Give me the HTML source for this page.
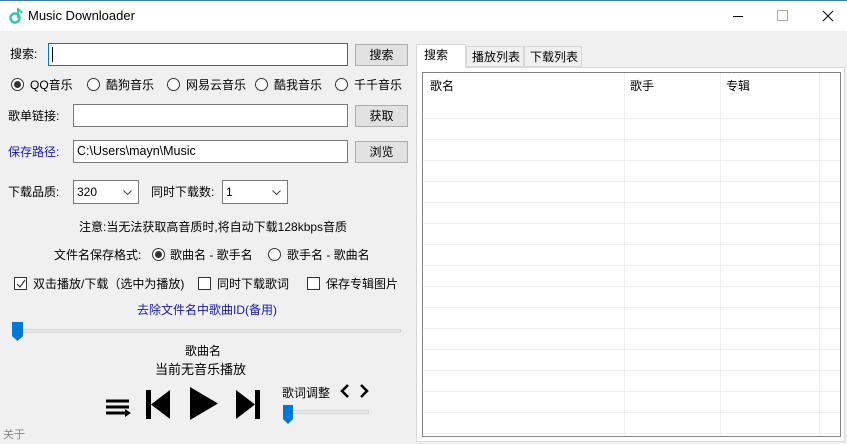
<!DOCTYPE html>
<html><head><meta charset="utf-8"><style>
*{margin:0;padding:0;box-sizing:border-box}
body{width:847px;height:444px;background:#f0f0f0;font-family:"Liberation Sans","Noto Sans CJK SC",sans-serif;font-size:12px;color:#000;position:relative;overflow:hidden}
.a{position:absolute;white-space:nowrap;line-height:14px}
.tb{position:absolute;left:0;top:0;width:847px;height:31px;background:#fff;border-top:1px solid #3a7bb5}
.in{position:absolute;background:#fff;border:1px solid #7a7a7a;height:23px}
.btn{position:absolute;background:#e1e1e1;border:1px solid #adadad;width:53px;height:22px;text-align:center;line-height:20px}
.rd{position:absolute;width:13px;height:13px;border:1px solid #333;border-radius:50%;background:#fff}
.rd.on::after{content:"";position:absolute;left:2px;top:2px;width:7px;height:7px;border-radius:50%;background:#333}
.cb{position:absolute;width:13px;height:13px;border:1px solid #333;background:#fff}
.sel{position:absolute;background:#fff;border:1px solid #7a7a7a;height:24px;line-height:22px;padding-left:3px}
.sel svg{position:absolute;right:6px;top:9px}
.hl{position:absolute;left:423px;width:417px;height:1px;background:#f0f0f0}
.vl{position:absolute;top:73px;width:1px;height:362px;background:#f0f0f0}
</style></head><body>
<div class="tb">
<svg class="a" style="left:9px;top:6px" width="14" height="17" viewBox="0 0 14 17"><circle cx="6" cy="11" r="4.5" fill="none" stroke="#39c6a8" stroke-width="2.5"/><path d="M9 11V2q2 1 4 4" fill="none" stroke="#39c6a8" stroke-width="2"/></svg>
<div class="a" style="left:28px;top:8px;font-size:13px">Music Downloader</div>
<div class="a" style="left:733px;top:15px;width:10px;height:1px;background:#000"></div>
<div class="a" style="left:777px;top:9px;width:11px;height:11px;border:1px solid #aaa"></div>
<svg class="a" style="left:822px;top:9px" width="12" height="12"><path d="M1 1L11 11M11 1L1 11" stroke="#000" stroke-width="1"/></svg>
</div>

<div class="a" style="left:10px;top:47px">搜索:</div>
<div class="in" style="left:48px;top:43px;width:300px;border-color:#0078d7"><div style="position:absolute;left:3px;top:3px;width:1px;height:15px;background:#000"></div></div>
<div class="btn" style="left:355px;top:44px">搜索</div>

<div class="rd on" style="left:11px;top:78px"></div><div class="a" style="left:30px;top:78px">QQ音乐</div>
<div class="rd" style="left:87px;top:78px"></div><div class="a" style="left:106px;top:78px">酷狗音乐</div>
<div class="rd" style="left:167px;top:78px"></div><div class="a" style="left:186px;top:78px">网易云音乐</div>
<div class="rd" style="left:255px;top:78px"></div><div class="a" style="left:274px;top:78px">酷我音乐</div>
<div class="rd" style="left:335px;top:78px"></div><div class="a" style="left:354px;top:78px">千千音乐</div>

<div class="a" style="left:8px;top:109px">歌单链接:</div>
<div class="in" style="left:73px;top:104px;width:275px"></div>
<div class="btn" style="left:355px;top:105px">获取</div>

<div class="a" style="left:8px;top:145px;color:#1a1aa8">保存路径:</div>
<div class="in" style="left:73px;top:140px;width:275px;line-height:21px;padding-left:3px;font-size:12.5px">C:\Users\mayn\Music</div>
<div class="btn" style="left:355px;top:141px">浏览</div>

<div class="a" style="left:8px;top:185px">下载品质:</div>
<div class="sel" style="left:73px;top:180px;width:66px">320<svg width="9" height="6"><path d="M0.5 0.5L4.5 4.5L8.5 0.5" fill="none" stroke="#444"/></svg></div>
<div class="a" style="left:151px;top:185px">同时下载数:</div>
<div class="sel" style="left:222px;top:180px;width:66px">1<svg width="9" height="6"><path d="M0.5 0.5L4.5 4.5L8.5 0.5" fill="none" stroke="#444"/></svg></div>

<div class="a" style="left:79px;top:220px">注意:当无法获取高音质时,将自动下载128kbps音质</div>

<div class="a" style="left:54px;top:248px">文件名保存格式:</div>
<div class="rd on" style="left:152px;top:248px"></div><div class="a" style="left:170px;top:248px">歌曲名 - 歌手名</div>
<div class="rd" style="left:268px;top:248px"></div><div class="a" style="left:287px;top:248px">歌手名 - 歌曲名</div>

<div class="cb" style="left:14px;top:277px"><svg style="position:absolute;left:1px;top:1px" width="10" height="10"><path d="M1 5L4 8L9 1" fill="none" stroke="#333" stroke-width="1.2"/></svg></div>
<div class="a" style="left:33px;top:277px">双击播放/下载（选中为播放)</div>
<div class="cb" style="left:198px;top:277px"></div><div class="a" style="left:217px;top:277px">同时下载歌词</div>
<div class="cb" style="left:307px;top:277px"></div><div class="a" style="left:326px;top:277px">保存专辑图片</div>

<div class="a" style="left:137px;top:303px;color:#1a1aa8">去除文件名中歌曲ID(备用)</div>

<div class="a" style="left:14px;top:329px;width:387px;height:4px;background:#e7e7e7;border:1px solid #d6d6d6"></div>
<svg class="a" style="left:12px;top:322px" width="12" height="20"><path d="M0 0H11V14L5.5 19L0 14Z" fill="#0078d7"/></svg>

<div class="a" style="left:185px;top:344px">歌曲名</div>
<div class="a" style="left:155px;top:363px;font-size:13px">当前无音乐播放</div>

<svg class="a" style="left:105px;top:398px" width="27" height="20"><path d="M1 3H24M1 9H24M1 15H21" stroke="#000" stroke-width="3"/><path d="M20 11L26 15L20 19Z" fill="#000"/></svg>
<svg class="a" style="left:146px;top:390px" width="25" height="29"><rect x="0" y="0" width="5" height="29"/><path d="M5 14.5L24 0V29Z"/></svg>
<svg class="a" style="left:190px;top:387px" width="29" height="33"><path d="M0 0L28 16.5L0 33Z"/></svg>
<svg class="a" style="left:236px;top:390px" width="25" height="29"><path d="M0 0L19 14.5L0 29Z"/><rect x="19" y="0" width="5" height="29"/></svg>

<div class="a" style="left:282px;top:386px">歌词调整</div>
<svg class="a" style="left:340px;top:384px" width="30" height="14"><path d="M8 1L2 7L8 13M21 1L27 7L21 13" fill="none" stroke="#000" stroke-width="2.5"/></svg>
<div class="a" style="left:284px;top:410px;width:85px;height:4px;background:#e7e7e7;border:1px solid #d6d6d6"></div>
<svg class="a" style="left:283px;top:405px" width="11" height="20"><path d="M0 0H10V14L5 19L0 14Z" fill="#0078d7"/></svg>

<div class="a" style="left:3px;top:428px;color:#888;font-size:11px">关于</div>

<!-- right -->
<div class="a" style="left:416px;top:67px;width:429px;height:375px;background:#fff;border:1px solid #d9d9d9"></div>
<div class="a" style="left:416px;top:44px;width:50px;height:24px;background:#fff;border:1px solid #d9d9d9;border-bottom:none;padding:3px 0 0 7px;line-height:14px">搜索</div>
<div class="a" style="left:466px;top:46px;width:58px;height:21px;background:#f0f0f0;border:1px solid #d9d9d9;padding:3px 0 0 5px">播放列表</div>
<div class="a" style="left:524px;top:46px;width:58px;height:21px;background:#f0f0f0;border:1px solid #d9d9d9;padding:3px 0 0 5px">下载列表</div>
<div class="a" style="left:422px;top:72px;width:419px;height:365px;border:1px solid #828282;background:#fff"></div>
<div class="a" style="left:430px;top:79px">歌名</div>
<div class="a" style="left:630px;top:79px">歌手</div>
<div class="a" style="left:726px;top:79px">专辑</div>
<div class="vl" style="left:624px"></div><div class="vl" style="left:720px"></div><div class="vl" style="left:819px"></div>
<div class="hl" style="top:118px"></div><div class="hl" style="top:139px"></div><div class="hl" style="top:160px"></div><div class="hl" style="top:181px"></div><div class="hl" style="top:202px"></div><div class="hl" style="top:223px"></div><div class="hl" style="top:244px"></div><div class="hl" style="top:265px"></div><div class="hl" style="top:286px"></div><div class="hl" style="top:307px"></div><div class="hl" style="top:328px"></div><div class="hl" style="top:349px"></div><div class="hl" style="top:370px"></div><div class="hl" style="top:391px"></div><div class="hl" style="top:412px"></div><div class="hl" style="top:433px"></div>
</body></html>
